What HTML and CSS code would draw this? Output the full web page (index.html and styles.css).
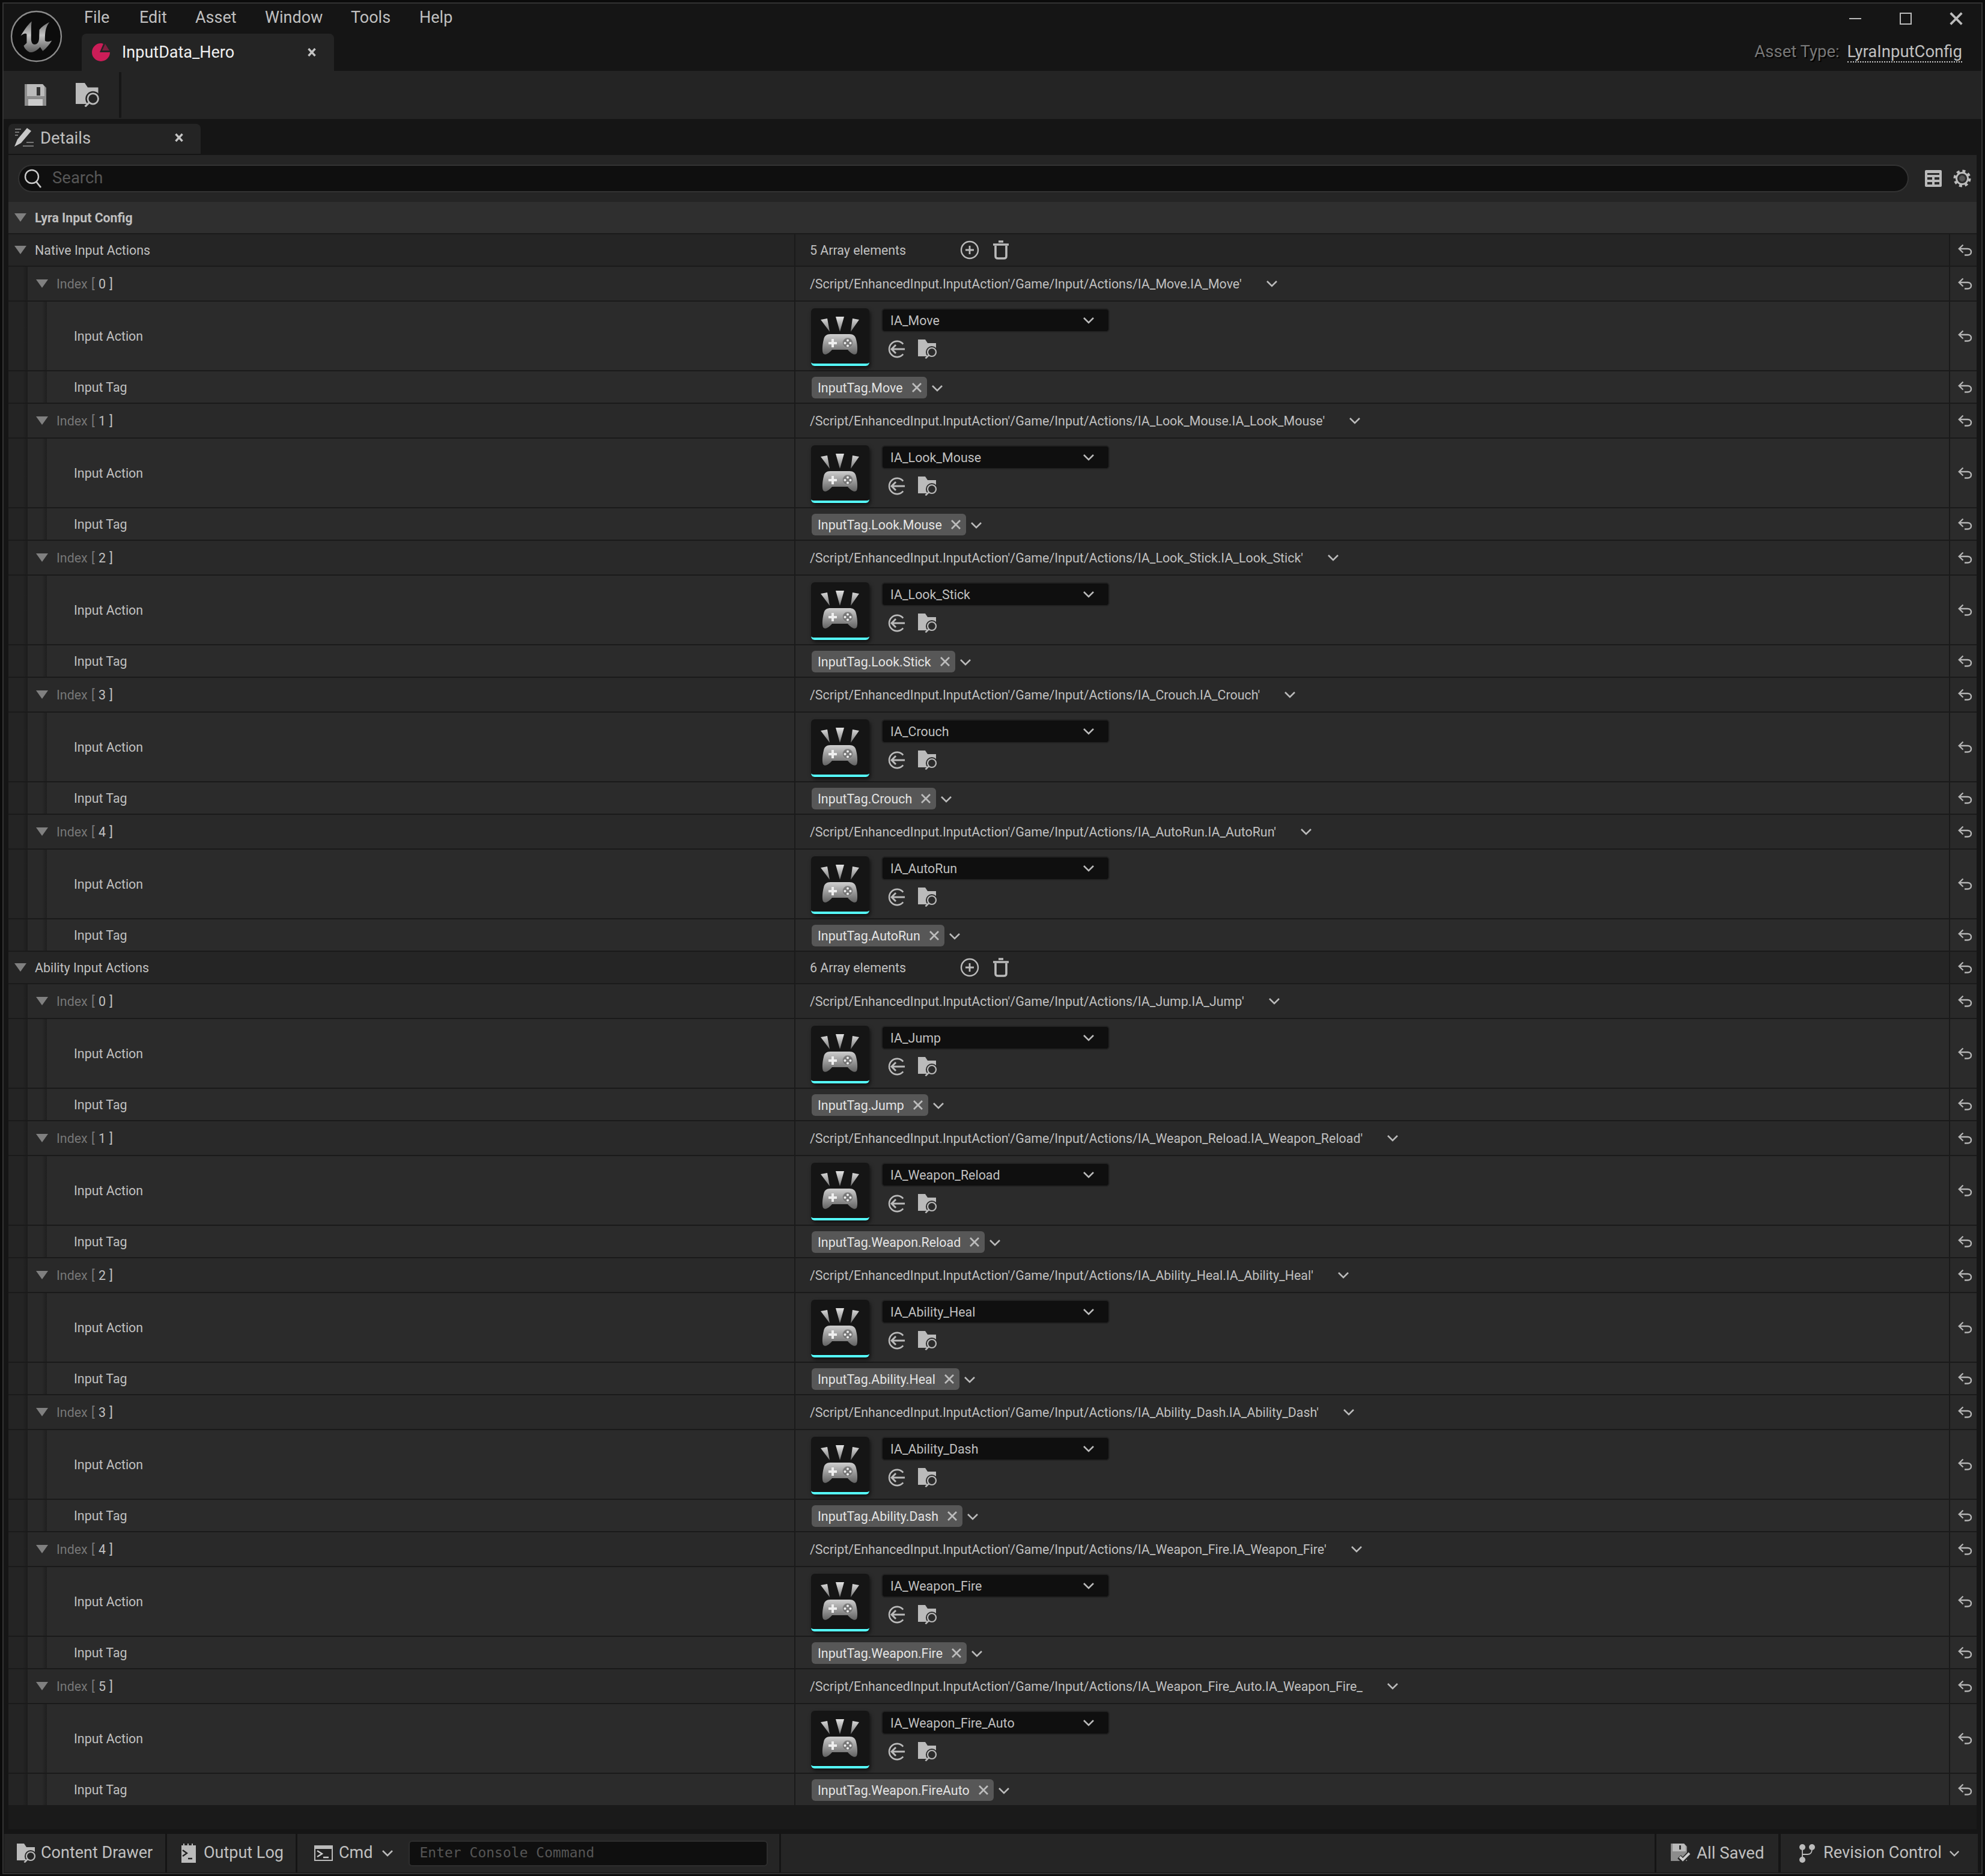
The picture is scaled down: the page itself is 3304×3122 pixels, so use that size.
FILE: index.html
```html
<!DOCTYPE html>
<html>

<head>
    <meta charset="UTF-8">
    <title>InputData_Hero</title>
    <link rel="stylesheet" href="styles.css">
</head>

<body>
    <svg class="defs" width="0" height="0">
        <defs>
            <linearGradient id="steel" x1="0" y1="0" x2="0" y2="1">
                <stop offset="0" stop-color="#6e6e6e"/><stop offset="0.45" stop-color="#c4c4c4"/><stop offset="1" stop-color="#5a5a5a"/>
            </linearGradient>
            <linearGradient id="pad" x1="0" y1="0" x2="0" y2="1">
                <stop offset="0" stop-color="#cfcfcf"/><stop offset="1" stop-color="#626262"/>
            </linearGradient>
            <linearGradient id="ray" x1="0" y1="0" x2="0" y2="1">
                <stop offset="0" stop-color="#e4e4e4"/><stop offset="1" stop-color="#777"/>
            </linearGradient>
            <symbol id="thumb" viewBox="0 0 97 96">
                <path d="M16 19 27 17 31 39ZM41 14H55L48 39ZM80 19 69 17 66 39Z" fill="url(#ray)"/>
                <path d="M32 43H64C70 43 74 46 75 52 77 60 78 70 76 75 73 79 67 76 61 69H35C29 76 23 79 20 75 18 70 19 60 21 52 22 46 26 43 32 43Z" fill="url(#pad)"/>
                <path d="M34 51h4v5h5v4h-5v5h-4v-5h-5v-4h5z" fill="#eee"/>
                <circle cx="61" cy="58" r="8.5" fill="#777" stroke="#999"/>
                <circle cx="61" cy="53.500" r="2" fill="#eee"/><circle cx="61" cy="62.500" r="2" fill="#eee"/><circle cx="56.500" cy="58" r="2" fill="#eee"/><circle cx="65.500" cy="58" r="2" fill="#eee"/>
            </symbol>
            <symbol id="browse" viewBox="0 0 32 32">
                <path d="M0 0H12L16 6H30V28H0Z" fill="#bbb"/>
                <circle cx="23" cy="21" r="10" fill="currentColor"/>
                <circle cx="23" cy="21" r="7" fill="none" stroke="#bbb" stroke-width="2.200"/>
                <path d="M18 26 12.500 31.500" stroke="#bbb" stroke-width="2.600" fill="none"/>
            </symbol>
            <symbol id="use-asset" viewBox="0 0 32 32">
                <path d="M28 7A14 14 0 1 0 28 25" fill="none" stroke="#bbb" stroke-width="2.800"/>
                <path d="M31 16H8M15 8.500 7.500 16 15 23.500" fill="none" stroke="#bbb" stroke-width="3.200"/>
            </symbol>
            <symbol id="chev" viewBox="0 0 20 12">
                <path d="M2 2 10 10 18 2" fill="none" stroke="#bbb" stroke-width="2.600"/>
            </symbol>
            <symbol id="reset" viewBox="0 0 24 20">
                <path d="M8.500 1.500 1.800 8 8.500 14.500M2 8H16C24 8 24 18.500 16 18.500H11" fill="none" stroke="#b4b4b4" stroke-width="2.400"/>
            </symbol>
            <symbol id="cross" viewBox="0 0 18 18">
                <path d="M2 2 16 16M16 2 2 16" fill="none" stroke="#bcbcbc" stroke-width="2.800"/>
            </symbol>
            <symbol id="tab-cross" viewBox="0 0 14 14">
                <path d="M1.500 1 12.500 13M12.500 1 1.500 13" fill="none" stroke="#c4c4c4" stroke-width="3.400"/>
            </symbol>
            <symbol id="tri" viewBox="0 0 20 14">
                <path d="M0 0H20L10 14Z" fill="#808080"/>
            </symbol>
            <symbol id="add" viewBox="0 0 32 32">
                <circle cx="16" cy="16" r="14" fill="none" stroke="#bbb" stroke-width="2.400"/>
                <path d="M16 9V23M9 16H23" stroke="#bbb" stroke-width="2.800"/>
            </symbol>
            <symbol id="trash" viewBox="0 0 28 32">
                <path d="M10 2H18M1 7H27" stroke="#bbb" stroke-width="3.500"/>
                <path d="M5 9V26C5 29 6 30 9 30H19C22 30 23 29 23 26V9" fill="none" stroke="#bbb" stroke-width="3.600"/>
            </symbol>
        </defs>
    </svg>

    <div class="window">
        <div class="titlebar">
            <svg class="logo" viewBox="50 50 266 266">
                <circle cx="183" cy="183" r="124" fill="#0c0c0c" stroke="#8c8c8c" stroke-width="7"/>
                <path d="M105 180C118 160 135 130 160 108 156 130 158 150 157 190 156 215 165 228 182 222 193 217 196 206 197 190L198 150C210 135 228 122 248 112 232 135 226 150 226 205 236 212 248 210 260 204 248 225 232 242 215 256L202 236C185 255 165 265 150 262 135 255 125 245 120 230L135 216V172C130 165 118 170 105 180Z" fill="url(#steel)"/>
            </svg>
            <div class="title-main">
                <nav class="menu">
                    <span class="menu-item w-file">File</span>
                    <span class="menu-item w-edit">Edit</span>
                    <span class="menu-item w-asset">Asset</span>
                    <span class="menu-item w-window">Window</span>
                    <span class="menu-item w-tools">Tools</span>
                    <span class="menu-item">Help</span>
                </nav>
                <div class="doc-tab">
                    <svg class="doc-icon" viewBox="0 0 32 32">
                        <path d="M16 1A15 15 0 1 0 31 16H14L20 2A15 15 0 0 0 16 1Z" fill="#cc1d58"/>
                        <path d="M23 2 30 13 18 13Z" fill="#7e2040"/>
                    </svg>
                    <span class="doc-name">InputData_Hero</span>
                    <svg class="tab-x"><use href="#tab-cross"/></svg>
                </div>
            </div>
            <div class="title-right">
                <div class="win-btns">
                    <span class="win-min"></span>
                    <span class="win-max"></span>
                    <svg class="win-close"><use href="#cross"/></svg>
                </div>
                <div class="asset-type"><span class="asset-label">Asset Type:</span> <span class="asset-link">LyraInputConfig</span></div>
            </div>
        </div>

        <div class="toolbar">
            <div class="tool-group">
                <svg class="tool-save" viewBox="0 0 36 36">
                    <path d="M0 0H30L36 6V36H0Z" fill="#8c8c8c"/>
                    <path d="M4 0H30L33 4V20H4Z" fill="#bbb"/>
                    <rect x="20" y="5" width="6" height="14" fill="#333"/>
                    <rect x="6" y="25" width="24" height="11" fill="#ccc"/>
                </svg>
                <svg class="tool-browse"><use href="#browse"/></svg>
            </div>
        </div>

        <div class="details">
            <div class="panel-tabs">
                <div class="panel-tab">
                    <svg class="details-icon" viewBox="0 0 32 32">
                        <path d="M1 2H11M1 7H8M1 12H6M20 24H32M14 30H32" stroke="#777" stroke-width="1.800"/>
                        <path d="M0 31 5 19 21 0 28 5 11 25Z" fill="#c8c8c8"/>
                    </svg>
                    <span class="panel-name">Details</span>
                    <svg class="panel-x"><use href="#tab-cross"/></svg>
                </div>
            </div>
            <div class="panel">
                <div class="search-row">
                    <div class="search-box">
                        <svg class="search-icon" viewBox="0 0 30 32">
                            <circle cx="13" cy="13" r="11" fill="none" stroke="#ccc" stroke-width="2.400"/>
                            <path d="M20 21 28 31" stroke="#ccc" stroke-width="2.800"/>
                        </svg>
                        <span class="search-text">Search</span>
                    </div>
                    <svg class="table-icon" viewBox="0 0 28 28">
                        <rect width="28" height="28" rx="2" fill="#bbb"/>
                        <path d="M4 5H24V8H4ZM4 12H12V16H4ZM16 12H24V16H16ZM4 20H12V24H4ZM16 20H24V24H16Z" fill="#2a2a2a"/>
                    </svg>
                    <svg class="gear-icon" viewBox="0 0 30 30">
                        <circle cx="15" cy="15" r="12" fill="none" stroke="#bbb" stroke-width="5" stroke-dasharray="4.800 4.625"/>
                        <circle cx="15" cy="15" r="9.500" fill="none" stroke="#bbb" stroke-width="3"/>
                        <circle cx="15" cy="15" r="5.500" fill="#555" stroke="#333" stroke-width="1.500"/>
                    </svg>
                </div>

                <div class="category"><svg class="tri"><use href="#tri"/></svg><span>Lyra Input Config</span></div>

                <div class="row array-row">
                    <div class="name"><svg class="tri"><use href="#tri"/></svg><span>Native Input Actions</span></div>
                    <div class="value"><span class="count">5 Array elements</span><svg class="add-icon"><use href="#add"/></svg><svg class="trash-icon"><use href="#trash"/></svg></div>
                    <div class="reset"><svg><use href="#reset"/></svg></div>
                </div>

                <div class="row index-row">
                    <i class="gutter"></i>
                    <div class="name"><svg class="tri"><use href="#tri"/></svg><span class="idx">Index [ <b>0 ]</b></span></div>
                    <div class="value"><span>/Script/EnhancedInput.InputAction'/Game/Input/Actions/IA_Move.IA_Move'</span><svg class="path-chev"><use href="#chev"/></svg></div>
                    <div class="reset"><svg><use href="#reset"/></svg></div>
                </div>
                <div class="row action-row">
                    <i class="gutter"></i><i class="gutter g2"></i>
                    <div class="name"><span>Input Action</span></div>
                    <div class="value">
                        <div class="thumb"><svg><use href="#thumb"/></svg></div>
                        <div class="picker">
                            <div class="combo"><span>IA_Move</span><svg class="combo-chev"><use href="#chev"/></svg></div>
                            <div class="picker-btns"><svg class="btn-use"><use href="#use-asset"/></svg><svg class="btn-browse"><use href="#browse"/></svg></div>
                        </div>
                    </div>
                    <div class="reset"><svg><use href="#reset"/></svg></div>
                </div>
                <div class="row tag-row">
                    <i class="gutter"></i><i class="gutter g2"></i>
                    <div class="name"><span>Input Tag</span></div>
                    <div class="value"><div class="chip"><span>InputTag.Move</span><svg class="chip-x"><use href="#cross"/></svg></div><svg class="chip-chev"><use href="#chev"/></svg></div>
                    <div class="reset"><svg><use href="#reset"/></svg></div>
                </div>

                <div class="row index-row">
                    <i class="gutter"></i>
                    <div class="name"><svg class="tri"><use href="#tri"/></svg><span class="idx">Index [ <b>1 ]</b></span></div>
                    <div class="value"><span>/Script/EnhancedInput.InputAction'/Game/Input/Actions/IA_Look_Mouse.IA_Look_Mouse'</span><svg class="path-chev"><use href="#chev"/></svg></div>
                    <div class="reset"><svg><use href="#reset"/></svg></div>
                </div>
                <div class="row action-row">
                    <i class="gutter"></i><i class="gutter g2"></i>
                    <div class="name"><span>Input Action</span></div>
                    <div class="value">
                        <div class="thumb"><svg><use href="#thumb"/></svg></div>
                        <div class="picker">
                            <div class="combo"><span>IA_Look_Mouse</span><svg class="combo-chev"><use href="#chev"/></svg></div>
                            <div class="picker-btns"><svg class="btn-use"><use href="#use-asset"/></svg><svg class="btn-browse"><use href="#browse"/></svg></div>
                        </div>
                    </div>
                    <div class="reset"><svg><use href="#reset"/></svg></div>
                </div>
                <div class="row tag-row">
                    <i class="gutter"></i><i class="gutter g2"></i>
                    <div class="name"><span>Input Tag</span></div>
                    <div class="value"><div class="chip"><span>InputTag.Look.Mouse</span><svg class="chip-x"><use href="#cross"/></svg></div><svg class="chip-chev"><use href="#chev"/></svg></div>
                    <div class="reset"><svg><use href="#reset"/></svg></div>
                </div>

                <div class="row index-row">
                    <i class="gutter"></i>
                    <div class="name"><svg class="tri"><use href="#tri"/></svg><span class="idx">Index [ <b>2 ]</b></span></div>
                    <div class="value"><span>/Script/EnhancedInput.InputAction'/Game/Input/Actions/IA_Look_Stick.IA_Look_Stick'</span><svg class="path-chev"><use href="#chev"/></svg></div>
                    <div class="reset"><svg><use href="#reset"/></svg></div>
                </div>
                <div class="row action-row">
                    <i class="gutter"></i><i class="gutter g2"></i>
                    <div class="name"><span>Input Action</span></div>
                    <div class="value">
                        <div class="thumb"><svg><use href="#thumb"/></svg></div>
                        <div class="picker">
                            <div class="combo"><span>IA_Look_Stick</span><svg class="combo-chev"><use href="#chev"/></svg></div>
                            <div class="picker-btns"><svg class="btn-use"><use href="#use-asset"/></svg><svg class="btn-browse"><use href="#browse"/></svg></div>
                        </div>
                    </div>
                    <div class="reset"><svg><use href="#reset"/></svg></div>
                </div>
                <div class="row tag-row">
                    <i class="gutter"></i><i class="gutter g2"></i>
                    <div class="name"><span>Input Tag</span></div>
                    <div class="value"><div class="chip"><span>InputTag.Look.Stick</span><svg class="chip-x"><use href="#cross"/></svg></div><svg class="chip-chev"><use href="#chev"/></svg></div>
                    <div class="reset"><svg><use href="#reset"/></svg></div>
                </div>

                <div class="row index-row">
                    <i class="gutter"></i>
                    <div class="name"><svg class="tri"><use href="#tri"/></svg><span class="idx">Index [ <b>3 ]</b></span></div>
                    <div class="value"><span>/Script/EnhancedInput.InputAction'/Game/Input/Actions/IA_Crouch.IA_Crouch'</span><svg class="path-chev"><use href="#chev"/></svg></div>
                    <div class="reset"><svg><use href="#reset"/></svg></div>
                </div>
                <div class="row action-row">
                    <i class="gutter"></i><i class="gutter g2"></i>
                    <div class="name"><span>Input Action</span></div>
                    <div class="value">
                        <div class="thumb"><svg><use href="#thumb"/></svg></div>
                        <div class="picker">
                            <div class="combo"><span>IA_Crouch</span><svg class="combo-chev"><use href="#chev"/></svg></div>
                            <div class="picker-btns"><svg class="btn-use"><use href="#use-asset"/></svg><svg class="btn-browse"><use href="#browse"/></svg></div>
                        </div>
                    </div>
                    <div class="reset"><svg><use href="#reset"/></svg></div>
                </div>
                <div class="row tag-row">
                    <i class="gutter"></i><i class="gutter g2"></i>
                    <div class="name"><span>Input Tag</span></div>
                    <div class="value"><div class="chip"><span>InputTag.Crouch</span><svg class="chip-x"><use href="#cross"/></svg></div><svg class="chip-chev"><use href="#chev"/></svg></div>
                    <div class="reset"><svg><use href="#reset"/></svg></div>
                </div>

                <div class="row index-row">
                    <i class="gutter"></i>
                    <div class="name"><svg class="tri"><use href="#tri"/></svg><span class="idx">Index [ <b>4 ]</b></span></div>
                    <div class="value"><span>/Script/EnhancedInput.InputAction'/Game/Input/Actions/IA_AutoRun.IA_AutoRun'</span><svg class="path-chev"><use href="#chev"/></svg></div>
                    <div class="reset"><svg><use href="#reset"/></svg></div>
                </div>
                <div class="row action-row">
                    <i class="gutter"></i><i class="gutter g2"></i>
                    <div class="name"><span>Input Action</span></div>
                    <div class="value">
                        <div class="thumb"><svg><use href="#thumb"/></svg></div>
                        <div class="picker">
                            <div class="combo"><span>IA_AutoRun</span><svg class="combo-chev"><use href="#chev"/></svg></div>
                            <div class="picker-btns"><svg class="btn-use"><use href="#use-asset"/></svg><svg class="btn-browse"><use href="#browse"/></svg></div>
                        </div>
                    </div>
                    <div class="reset"><svg><use href="#reset"/></svg></div>
                </div>
                <div class="row tag-row">
                    <i class="gutter"></i><i class="gutter g2"></i>
                    <div class="name"><span>Input Tag</span></div>
                    <div class="value"><div class="chip"><span>InputTag.AutoRun</span><svg class="chip-x"><use href="#cross"/></svg></div><svg class="chip-chev"><use href="#chev"/></svg></div>
                    <div class="reset"><svg><use href="#reset"/></svg></div>
                </div>

                <div class="row array-row">
                    <div class="name"><svg class="tri"><use href="#tri"/></svg><span>Ability Input Actions</span></div>
                    <div class="value"><span class="count">6 Array elements</span><svg class="add-icon"><use href="#add"/></svg><svg class="trash-icon"><use href="#trash"/></svg></div>
                    <div class="reset"><svg><use href="#reset"/></svg></div>
                </div>

                <div class="row index-row">
                    <i class="gutter"></i>
                    <div class="name"><svg class="tri"><use href="#tri"/></svg><span class="idx">Index [ <b>0 ]</b></span></div>
                    <div class="value"><span>/Script/EnhancedInput.InputAction'/Game/Input/Actions/IA_Jump.IA_Jump'</span><svg class="path-chev"><use href="#chev"/></svg></div>
                    <div class="reset"><svg><use href="#reset"/></svg></div>
                </div>
                <div class="row action-row">
                    <i class="gutter"></i><i class="gutter g2"></i>
                    <div class="name"><span>Input Action</span></div>
                    <div class="value">
                        <div class="thumb"><svg><use href="#thumb"/></svg></div>
                        <div class="picker">
                            <div class="combo"><span>IA_Jump</span><svg class="combo-chev"><use href="#chev"/></svg></div>
                            <div class="picker-btns"><svg class="btn-use"><use href="#use-asset"/></svg><svg class="btn-browse"><use href="#browse"/></svg></div>
                        </div>
                    </div>
                    <div class="reset"><svg><use href="#reset"/></svg></div>
                </div>
                <div class="row tag-row">
                    <i class="gutter"></i><i class="gutter g2"></i>
                    <div class="name"><span>Input Tag</span></div>
                    <div class="value"><div class="chip"><span>InputTag.Jump</span><svg class="chip-x"><use href="#cross"/></svg></div><svg class="chip-chev"><use href="#chev"/></svg></div>
                    <div class="reset"><svg><use href="#reset"/></svg></div>
                </div>

                <div class="row index-row">
                    <i class="gutter"></i>
                    <div class="name"><svg class="tri"><use href="#tri"/></svg><span class="idx">Index [ <b>1 ]</b></span></div>
                    <div class="value"><span>/Script/EnhancedInput.InputAction'/Game/Input/Actions/IA_Weapon_Reload.IA_Weapon_Reload'</span><svg class="path-chev"><use href="#chev"/></svg></div>
                    <div class="reset"><svg><use href="#reset"/></svg></div>
                </div>
                <div class="row action-row">
                    <i class="gutter"></i><i class="gutter g2"></i>
                    <div class="name"><span>Input Action</span></div>
                    <div class="value">
                        <div class="thumb"><svg><use href="#thumb"/></svg></div>
                        <div class="picker">
                            <div class="combo"><span>IA_Weapon_Reload</span><svg class="combo-chev"><use href="#chev"/></svg></div>
                            <div class="picker-btns"><svg class="btn-use"><use href="#use-asset"/></svg><svg class="btn-browse"><use href="#browse"/></svg></div>
                        </div>
                    </div>
                    <div class="reset"><svg><use href="#reset"/></svg></div>
                </div>
                <div class="row tag-row">
                    <i class="gutter"></i><i class="gutter g2"></i>
                    <div class="name"><span>Input Tag</span></div>
                    <div class="value"><div class="chip"><span>InputTag.Weapon.Reload</span><svg class="chip-x"><use href="#cross"/></svg></div><svg class="chip-chev"><use href="#chev"/></svg></div>
                    <div class="reset"><svg><use href="#reset"/></svg></div>
                </div>

                <div class="row index-row">
                    <i class="gutter"></i>
                    <div class="name"><svg class="tri"><use href="#tri"/></svg><span class="idx">Index [ <b>2 ]</b></span></div>
                    <div class="value"><span>/Script/EnhancedInput.InputAction'/Game/Input/Actions/IA_Ability_Heal.IA_Ability_Heal'</span><svg class="path-chev"><use href="#chev"/></svg></div>
                    <div class="reset"><svg><use href="#reset"/></svg></div>
                </div>
                <div class="row action-row">
                    <i class="gutter"></i><i class="gutter g2"></i>
                    <div class="name"><span>Input Action</span></div>
                    <div class="value">
                        <div class="thumb"><svg><use href="#thumb"/></svg></div>
                        <div class="picker">
                            <div class="combo"><span>IA_Ability_Heal</span><svg class="combo-chev"><use href="#chev"/></svg></div>
                            <div class="picker-btns"><svg class="btn-use"><use href="#use-asset"/></svg><svg class="btn-browse"><use href="#browse"/></svg></div>
                        </div>
                    </div>
                    <div class="reset"><svg><use href="#reset"/></svg></div>
                </div>
                <div class="row tag-row">
                    <i class="gutter"></i><i class="gutter g2"></i>
                    <div class="name"><span>Input Tag</span></div>
                    <div class="value"><div class="chip"><span>InputTag.Ability.Heal</span><svg class="chip-x"><use href="#cross"/></svg></div><svg class="chip-chev"><use href="#chev"/></svg></div>
                    <div class="reset"><svg><use href="#reset"/></svg></div>
                </div>

                <div class="row index-row">
                    <i class="gutter"></i>
                    <div class="name"><svg class="tri"><use href="#tri"/></svg><span class="idx">Index [ <b>3 ]</b></span></div>
                    <div class="value"><span>/Script/EnhancedInput.InputAction'/Game/Input/Actions/IA_Ability_Dash.IA_Ability_Dash'</span><svg class="path-chev"><use href="#chev"/></svg></div>
                    <div class="reset"><svg><use href="#reset"/></svg></div>
                </div>
                <div class="row action-row">
                    <i class="gutter"></i><i class="gutter g2"></i>
                    <div class="name"><span>Input Action</span></div>
                    <div class="value">
                        <div class="thumb"><svg><use href="#thumb"/></svg></div>
                        <div class="picker">
                            <div class="combo"><span>IA_Ability_Dash</span><svg class="combo-chev"><use href="#chev"/></svg></div>
                            <div class="picker-btns"><svg class="btn-use"><use href="#use-asset"/></svg><svg class="btn-browse"><use href="#browse"/></svg></div>
                        </div>
                    </div>
                    <div class="reset"><svg><use href="#reset"/></svg></div>
                </div>
                <div class="row tag-row">
                    <i class="gutter"></i><i class="gutter g2"></i>
                    <div class="name"><span>Input Tag</span></div>
                    <div class="value"><div class="chip"><span>InputTag.Ability.Dash</span><svg class="chip-x"><use href="#cross"/></svg></div><svg class="chip-chev"><use href="#chev"/></svg></div>
                    <div class="reset"><svg><use href="#reset"/></svg></div>
                </div>

                <div class="row index-row">
                    <i class="gutter"></i>
                    <div class="name"><svg class="tri"><use href="#tri"/></svg><span class="idx">Index [ <b>4 ]</b></span></div>
                    <div class="value"><span>/Script/EnhancedInput.InputAction'/Game/Input/Actions/IA_Weapon_Fire.IA_Weapon_Fire'</span><svg class="path-chev"><use href="#chev"/></svg></div>
                    <div class="reset"><svg><use href="#reset"/></svg></div>
                </div>
                <div class="row action-row">
                    <i class="gutter"></i><i class="gutter g2"></i>
                    <div class="name"><span>Input Action</span></div>
                    <div class="value">
                        <div class="thumb"><svg><use href="#thumb"/></svg></div>
                        <div class="picker">
                            <div class="combo"><span>IA_Weapon_Fire</span><svg class="combo-chev"><use href="#chev"/></svg></div>
                            <div class="picker-btns"><svg class="btn-use"><use href="#use-asset"/></svg><svg class="btn-browse"><use href="#browse"/></svg></div>
                        </div>
                    </div>
                    <div class="reset"><svg><use href="#reset"/></svg></div>
                </div>
                <div class="row tag-row">
                    <i class="gutter"></i><i class="gutter g2"></i>
                    <div class="name"><span>Input Tag</span></div>
                    <div class="value"><div class="chip"><span>InputTag.Weapon.Fire</span><svg class="chip-x"><use href="#cross"/></svg></div><svg class="chip-chev"><use href="#chev"/></svg></div>
                    <div class="reset"><svg><use href="#reset"/></svg></div>
                </div>

                <div class="row index-row">
                    <i class="gutter"></i>
                    <div class="name"><svg class="tri"><use href="#tri"/></svg><span class="idx">Index [ <b>5 ]</b></span></div>
                    <div class="value"><span>/Script/EnhancedInput.InputAction'/Game/Input/Actions/IA_Weapon_Fire_Auto.IA_Weapon_Fire_</span><svg class="path-chev"><use href="#chev"/></svg></div>
                    <div class="reset"><svg><use href="#reset"/></svg></div>
                </div>
                <div class="row action-row">
                    <i class="gutter"></i><i class="gutter g2"></i>
                    <div class="name"><span>Input Action</span></div>
                    <div class="value">
                        <div class="thumb"><svg><use href="#thumb"/></svg></div>
                        <div class="picker">
                            <div class="combo"><span>IA_Weapon_Fire_Auto</span><svg class="combo-chev"><use href="#chev"/></svg></div>
                            <div class="picker-btns"><svg class="btn-use"><use href="#use-asset"/></svg><svg class="btn-browse"><use href="#browse"/></svg></div>
                        </div>
                    </div>
                    <div class="reset"><svg><use href="#reset"/></svg></div>
                </div>
                <div class="row tag-row">
                    <i class="gutter"></i><i class="gutter g2"></i>
                    <div class="name"><span>Input Tag</span></div>
                    <div class="value"><div class="chip"><span>InputTag.Weapon.FireAuto</span><svg class="chip-x"><use href="#cross"/></svg></div><svg class="chip-chev"><use href="#chev"/></svg></div>
                    <div class="reset"><svg><use href="#reset"/></svg></div>
                </div>
            </div>
        </div>

        <div class="statusbar">
            <div class="seg seg-drawer">
                <svg class="st-drawer"><use href="#browse"/></svg><span>Content Drawer</span>
            </div>
            <div class="seg seg-log">
                <svg class="st-log" viewBox="0 0 24 32">
                    <path d="M0 32V3H3V0H5V3H10V0H12V3H17V0H19V3H24V32Z" fill="#bbb"/>
                    <path d="M2 11 9 16 2 21M11 25H18" fill="none" stroke="#222" stroke-width="2.400"/>
                </svg><span>Output Log</span>
            </div>
            <div class="seg seg-cmd">
                <svg class="st-cmd" viewBox="0 0 31 26">
                    <rect width="31" height="26" fill="#bbb"/>
                    <rect x="2" y="6" width="27" height="18" fill="#222"/>
                    <path d="M5 9 13 14 5 19M15 20H24" fill="none" stroke="#ccc" stroke-width="2.400"/>
                </svg><span>Cmd</span><svg class="cmd-chev"><use href="#chev"/></svg>
                <div class="console">Enter Console Command</div>
            </div>
            <div class="seg seg-fill"></div>
            <div class="seg seg-saved">
                <svg class="st-saved" viewBox="0 0 34 32">
                    <path d="M0 0H22L27 5V29H0Z" fill="#8c8c8c"/>
                    <path d="M3 0H22L25 4V13H3Z" fill="#bbb"/>
                    <rect x="14" y="3" width="3" height="7" fill="#333"/>
                    <path d="M14 22 20 28 32 15" fill="none" stroke="#262626" stroke-width="8"/>
                    <path d="M15 22 20 27 31 16" fill="none" stroke="#ccc" stroke-width="4"/>
                </svg><span>All Saved</span>
            </div>
            <div class="seg seg-rev">
                <svg class="st-rev" viewBox="0 0 26 32">
                    <circle cx="5" cy="6" r="5" fill="#bbb"/><circle cx="21" cy="6" r="5" fill="#bbb"/><circle cx="5" cy="27" r="5" fill="#bbb"/>
                    <path d="M5 8V25M5 18H14C19 18 21 15 21 9" fill="none" stroke="#bbb" stroke-width="1.800"/>
                </svg><span>Revision Control</span><svg class="rev-chev"><use href="#chev"/></svg>
            </div>
        </div>
    </div>
</body>

</html>
```

FILE: styles.css
```css
* {
    margin: 0;
    padding: 0;
    box-sizing: border-box;
}

body {
    font-family: 'Roboto', sans-serif;
    background-color: #0b0b0b;
    color: #c0c0c0;
    width: 3304px;
    height: 3122px;
    overflow: hidden;
    padding: 4px;
}

svg {
    display: block;
    flex: none;
}

.defs {
    position: absolute;
}

.window {
    width: 3296px;
    height: 3115px;
    border: 2px solid #333;
    background-color: #151515;
}

/* title bar */
.titlebar {
    height: 112px;
    display: flex;
    background-color: #151515;
}

.logo {
    width: 89px;
    height: 89px;
    margin: 10px 0 0 10px;
}

.title-main {
    margin-left: 31px;
    flex: 1;
    display: flex;
    flex-direction: column;
}

.menu {
    height: 50px;
    display: flex;
    align-items: center;
    padding: 0 0 4px 4px;
    font-size: 27px;
    color: #c0c0c0;
}

.w-file { width: 92px; }
.w-edit { width: 93px; }
.w-asset { width: 116px; }
.w-window { width: 143px; }
.w-tools { width: 114px; }

.doc-tab {
    width: 420px;
    height: 62px;
    background-color: #242424;
    border-radius: 8px 8px 0 0;
    display: flex;
    align-items: center;
    padding-left: 16px;
}

.doc-icon {
    width: 32px;
    height: 32px;
}

.doc-name {
    margin-left: 19px;
    font-size: 27px;
    color: #f0f0f0;
    width: 309px;
}

.tab-x {
    width: 14px;
    height: 14px;
}

.title-right {
    width: 400px;
    display: flex;
    flex-direction: column;
    align-items: flex-end;
}

.win-btns {
    height: 50px;
    display: flex;
    align-items: center;
    padding-right: 30px;
}

.win-min {
    width: 20px;
    height: 2px;
    background-color: #bbb;
}

.win-max {
    width: 20px;
    height: 20px;
    border: 2px solid #bbb;
    margin-left: 64px;
}

.win-close {
    width: 24px;
    height: 24px;
    margin-left: 62px;
}

.asset-type {
    margin-top: 13px;
    padding-right: 32px;
    font-size: 27.5px;
    white-space: nowrap;
}

.asset-label {
    color: #777;
    text-shadow: 2px 2px 1px #000;
}

.asset-link {
    color: #c0c0c0;
    margin-left: 6px;
    border-bottom: 2px dotted #ccc;
}

/* toolbar */
.toolbar {
    height: 80px;
    padding-top: 2px;
    background-color: #242424;
}

.tool-group {
    width: 196px;
    height: 76px;
    border-right: 4px solid #171717;
    display: flex;
    align-items: center;
    padding-left: 35px;
}

.tool-save {
    width: 36px;
    height: 36px;
}

.tool-browse {
    width: 40px;
    height: 40px;
    margin-left: 49px;
    color: #242424;
}

/* details panel */
.details {
    height: 2854px;
    padding: 0 8px;
}

.panel-tabs {
    height: 60px;
    padding-top: 8px;
}

.panel-tab {
    width: 320px;
    height: 50px;
    background-color: #242424;
    border-radius: 8px 8px 0 0;
    display: flex;
    align-items: center;
    padding: 0 0 4px 10px;
}

.details-icon {
    width: 32px;
    height: 32px;
}

.panel-name {
    margin-left: 11px;
    width: 224px;
    font-size: 27.5px;
    color: #c0c0c0;
}

.panel-x {
    width: 14px;
    height: 14px;
}

.panel {
    height: 2786px;
    background-color: #1a1a1a;
}

.search-row {
    height: 78px;
    background-color: #252525;
    display: flex;
    align-items: center;
    padding-left: 16px;
}

.search-box {
    width: 3147px;
    height: 46px;
    background-color: #0f0f0f;
    border: 2px solid #333;
    border-radius: 23px;
    display: flex;
    align-items: center;
    padding-left: 8px;
}

.search-icon {
    width: 30px;
    height: 32px;
}

.search-text {
    margin-left: 17px;
    padding-bottom: 4px;
    font-size: 27.5px;
    color: #565656;
}

.table-icon {
    width: 28px;
    height: 28px;
    margin-left: 27px;
}

.gear-icon {
    width: 30px;
    height: 30px;
    margin-left: 19px;
}

.category {
    height: 52px;
    margin-bottom: 2px;
    background-color: #2f2f2f;
    display: flex;
    align-items: center;
    padding-left: 10px;
    font-size: 21.3px;
    font-weight: 700;
}

.tri {
    width: 20px;
    height: 14px;
    margin-right: 14px;
}

/* property rows */
.row {
    display: flex;
    margin-bottom: 2px;
    font-size: 21.4px;
}

.array-row { height: 52px; }
.index-row { height: 56px; }
.action-row { height: 114px; }
.tag-row { height: 52px; }

.array-row > div { background-color: #252525; }
.index-row > div { background-color: #292929; }
.action-row > div,
.tag-row > div { background-color: #2b2b2b; }

.gutter {
    width: 32px;
    background: linear-gradient(90deg, #242424 75%, #1c1c1c);
}

.g2 {
    background: linear-gradient(90deg, #292929 75%, #1f1f1f);
}

.name {
    display: flex;
    align-items: center;
    margin-right: 2px;
}

.array-row .name {
    width: 1308px;
    padding-left: 10px;
}

.index-row .name {
    width: 1276px;
    padding-left: 14px;
}

.action-row .name,
.tag-row .name {
    width: 1244px;
    padding-left: 45px;
}

.idx {
    color: #777;
    word-spacing: 1px;
}

.idx b {
    font-weight: 400;
    color: #c0c0c0;
}

.value {
    width: 1920px;
    margin-right: 2px;
    display: flex;
    align-items: center;
    padding-left: 24px;
    white-space: nowrap;
}

.reset {
    width: 44px;
    display: flex;
    align-items: center;
    padding-left: 13px;
}

.reset svg {
    width: 24px;
    height: 20px;
}

.count {
    width: 250px;
}

.add-icon {
    width: 32px;
    height: 32px;
}

.trash-icon {
    width: 28px;
    height: 32px;
    margin-left: 22px;
}

.path-chev {
    width: 20px;
    height: 12px;
    margin-left: 40px;
}

/* asset picker */
.thumb {
    width: 97px;
    height: 96px;
    margin: 4px 0 0 2px;
    background-color: #151515;
    border-bottom: 4px solid #5ff;
    border-radius: 6px;
    box-shadow: 2px 4px 6px rgba(0, 0, 0, 0.6);
}

.thumb svg {
    width: 97px;
    height: 96px;
}

.picker {
    margin-left: 20px;
    align-self: flex-start;
    padding-top: 11px;
}

.combo {
    width: 380px;
    height: 40px;
    background-color: #0f0f0f;
    border: 2px solid #222;
    border-radius: 6px;
    display: flex;
    align-items: center;
    justify-content: space-between;
    padding: 0 23px 0 13px;
}

.combo-chev {
    width: 20px;
    height: 12px;
}

.picker-btns {
    display: flex;
    align-items: center;
    margin-top: 12px;
    padding-left: 10px;
}

.btn-use {
    width: 30px;
    height: 30px;
}

.btn-browse {
    width: 32px;
    height: 32px;
    margin-left: 21px;
    color: #2b2b2b;
}

/* tag chip */
.chip {
    height: 36px;
    margin: 2px 0 0 3px;
    background-color: #575757;
    border-radius: 6px;
    display: flex;
    align-items: center;
    padding: 0 8px 0 10px;
    color: #e4e4e4;
}

.chip-x {
    width: 18px;
    height: 18px;
    margin-left: 14px;
}

.chip-chev {
    width: 20px;
    height: 12px;
    margin: 4px 0 0 7px;
}

/* status bar */
.statusbar {
    height: 65px;
    margin-left: 1px;
    display: flex;
    font-size: 27px;
    color: #c0c0c0;
}

.seg {
    height: 64px;
    background-color: #252525;
    display: flex;
    align-items: center;
    margin-right: 3px;
}

.seg span {
    padding-bottom: 2px;
}

.seg-drawer {
    width: 268px;
    padding-left: 21px;
}

.st-drawer {
    width: 32px;
    height: 32px;
    margin-right: 8px;
    color: #252525;
}

.seg-log {
    width: 214px;
    padding-left: 24px;
}

.st-log {
    width: 24px;
    height: 32px;
    margin-right: 13px;
}

.seg-cmd {
    width: 802px;
    padding-left: 28px;
}

.st-cmd {
    width: 31px;
    height: 26px;
    margin-right: 10px;
}

.cmd-chev {
    width: 20px;
    height: 12px;
    margin-left: 15px;
}

.console {
    width: 598px;
    height: 43px;
    margin-left: 25px;
    background-color: #0f0f0f;
    border: 2px solid #2e2e2e;
    border-radius: 6px;
    padding-left: 16px;
    line-height: 36px;
    font-family: 'DejaVu Sans Mono', monospace;
    font-size: 23px;
    color: #555;
}

.seg-fill {
    width: 1454px;
}

.seg-saved {
    width: 203px;
    padding-left: 24px;
    margin-right: 4px;
    font-size: 27.5px;
}

.st-saved {
    width: 34px;
    height: 32px;
    margin-right: 9px;
}

.seg-rev {
    width: 328px;
    padding-left: 31px;
    margin-right: 0;
    font-size: 27.2px;
}

.st-rev {
    width: 26px;
    height: 32px;
    margin-right: 14px;
}

.rev-chev {
    width: 18px;
    height: 11px;
    margin-left: 12px;
}
```
